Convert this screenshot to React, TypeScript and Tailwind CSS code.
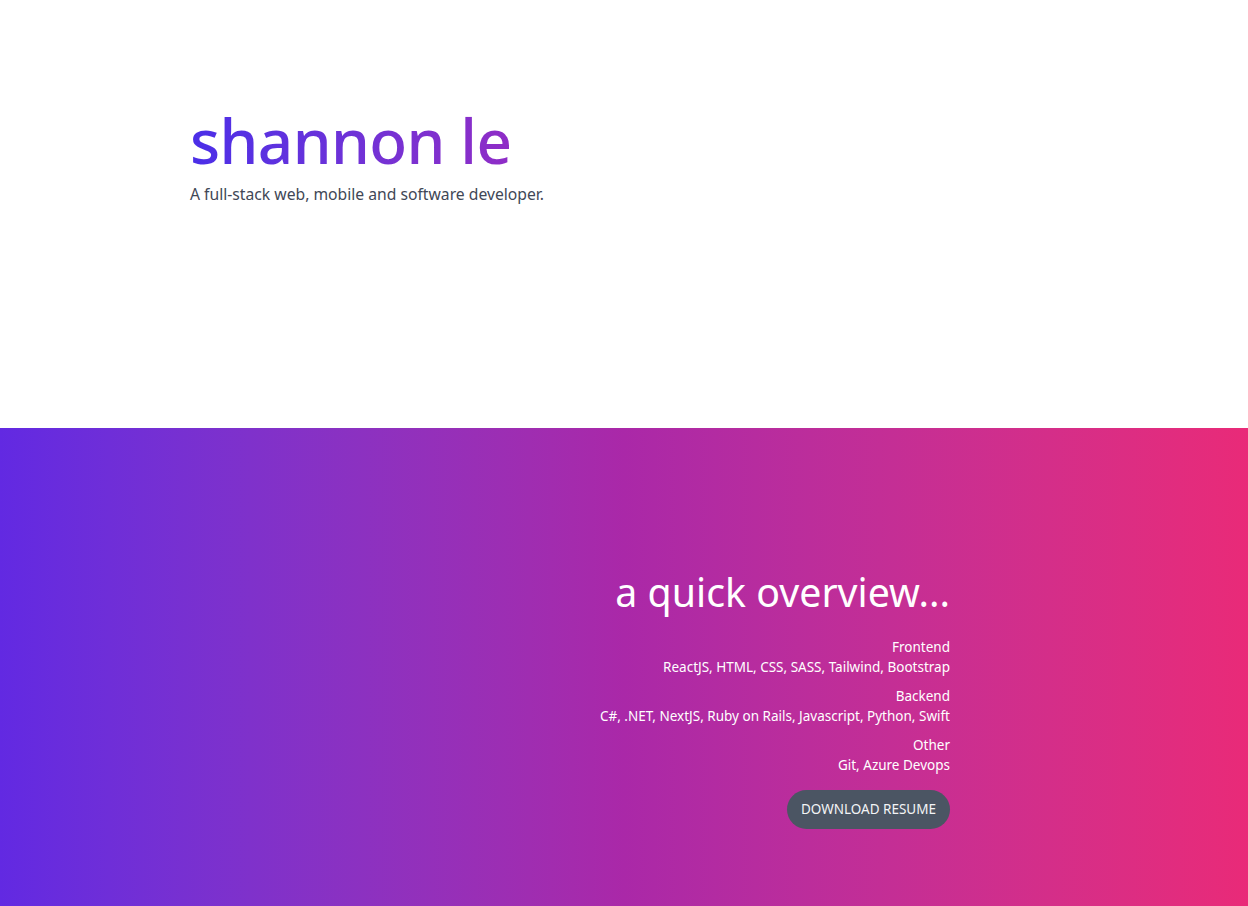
const groups = [
  { title: "Frontend", items: "ReactJS, HTML, CSS, SASS, Tailwind, Bootstrap" },
  { title: "Backend", items: "C#, .NET, NextJS, Ruby on Rails, Javascript, Python, Swift" },
  { title: "Other", items: "Git, Azure Devops" },
];

export default function App() {
  return (
    <div className="min-h-screen bg-white font-['Noto_Sans','Open_Sans',sans-serif]">
      <section className="h-[428px] pl-[190px] pt-[100px]">
        <h1 className="inline-block bg-gradient-to-r from-[#4a2ee8] to-[#8f2cc6] bg-clip-text pb-1 text-[62px] font-medium leading-[80px] tracking-[-0.6px] text-transparent">
          shannon le
        </h1>
        <p className="-mt-[1px] text-[15.7px] text-[#414756]">
          A full-stack web, mobile and software developer.
        </p>
      </section>

      <section className="h-[478px] bg-gradient-to-r from-[#6229e2] via-[#aa28a8] to-[#e92a78] pr-[298px] pt-[140px]">
        <div className="flex flex-col items-end text-right text-white">
          <h2 className="text-[39.3px] leading-[48px]">a quick overview...</h2>
          <div className="mt-[21px] flex flex-col items-end gap-[9px] text-[13.5px] leading-5">
            {groups.map((g) => (
              <div key={g.title}>
                <div>{g.title}</div>
                <div>{g.items}</div>
              </div>
            ))}
          </div>
          <button className="mt-[15px] h-[39px] rounded-full bg-[#4b5563] px-[14px] text-[13.5px] text-gray-100">
            DOWNLOAD RESUME
          </button>
        </div>
      </section>
    </div>
  );
}
